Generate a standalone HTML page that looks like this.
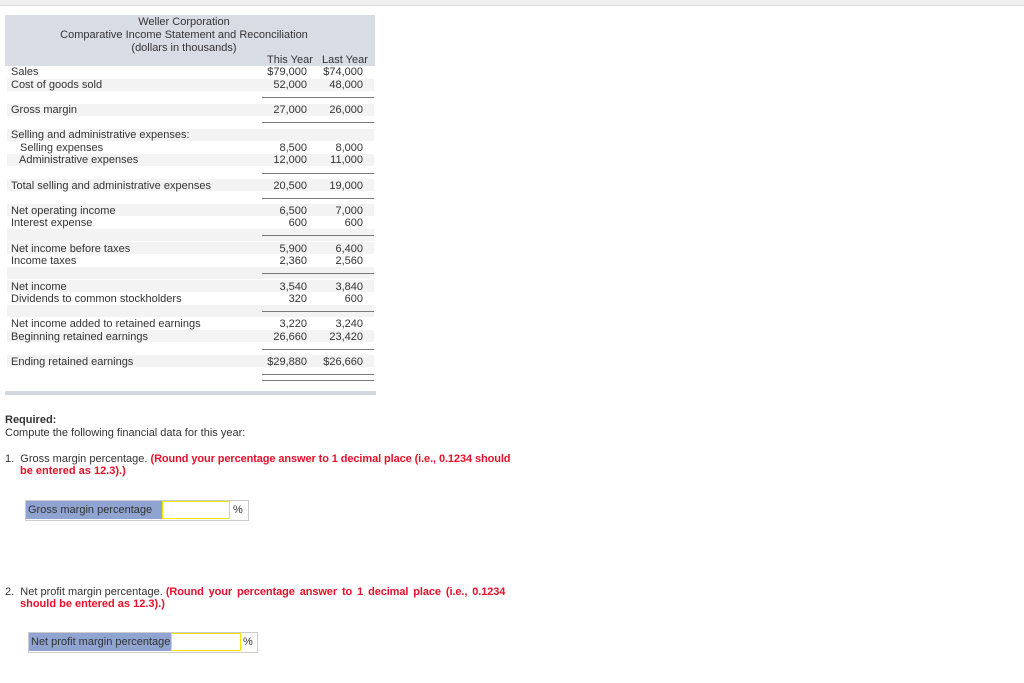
<!DOCTYPE html>
<html><head><meta charset="utf-8"><style>
body{margin:0;width:1024px;height:683px;background:#fff;font-family:"Liberation Sans",Arial,sans-serif;color:#333;position:relative;overflow:hidden}
.a{position:absolute;font-size:11px;line-height:13px;white-space:nowrap}
.t{margin-top:1px}
.bg{position:absolute;left:7px;width:367px;height:12px;background:#f3f3f3}
.ln{position:absolute;left:262px;width:112px;height:1px;background:#777}
.r1{position:absolute;width:60px;text-align:right;left:247px}
.r2{position:absolute;width:60px;text-align:right;left:303px}
.red{color:#e8102a;font-weight:bold}
</style></head><body>
<div style="position:absolute;left:0;top:0;width:1024px;height:5px;background:#f0f0f0;border-bottom:1px solid #ddd"></div>
<div style="position:absolute;left:5px;top:15px;width:370px;height:51px;background:#d8dce5"></div>
<div class="a" style="left:-1px;top:16px;width:370px;text-align:center">Weller Corporation<br>Comparative Income Statement and Reconciliation<br>(dollars in thousands)</div>
<div class="a" style="left:267px;top:54px">This Year&nbsp;&nbsp;&nbsp;Last Year</div>

<div class="bg" style="top:79px"></div>
<div class="bg" style="top:104px"></div>
<div class="bg" style="top:129px"></div>
<div class="bg" style="top:154px"></div>
<div class="bg" style="top:179px"></div>
<div class="bg" style="top:204px"></div>
<div class="bg" style="top:229px"></div>
<div class="bg" style="top:242px"></div>
<div class="bg" style="top:267px"></div>
<div class="bg" style="top:280px"></div>
<div class="bg" style="top:305px"></div>
<div class="bg" style="top:330px"></div>
<div class="bg" style="top:355px"></div>

<div class="ln" style="top:97px"></div>
<div class="ln" style="top:122px"></div>
<div class="ln" style="top:173px"></div>
<div class="ln" style="top:198px"></div>
<div class="ln" style="top:235px"></div>
<div class="ln" style="top:273px"></div>
<div class="ln" style="top:311px"></div>
<div class="ln" style="top:349px"></div>
<div class="ln" style="top:374px"></div>
<div class="ln" style="top:380px"></div>
<div style="position:absolute;left:5px;top:391px;width:371px;height:4px;background:#d3d7e0"></div>

<div class="a" style="left:11px;top:66px">Sales</div><div class="a r1" style="top:66px">$79,000</div><div class="a r2" style="top:66px">$74,000</div>
<div class="a" style="left:11px;top:79px">Cost of goods sold</div><div class="a r1" style="top:79px">52,000</div><div class="a r2" style="top:79px">48,000</div>
<div class="a" style="left:11px;top:104px">Gross margin</div><div class="a r1" style="top:104px">27,000</div><div class="a r2" style="top:104px">26,000</div>
<div class="a" style="left:11px;top:129px">Selling and administrative expenses:</div>
<div class="a" style="left:20px;top:142px">Selling expenses</div><div class="a r1" style="top:142px">8,500</div><div class="a r2" style="top:142px">8,000</div>
<div class="a" style="left:19px;top:154px">Administrative expenses</div><div class="a r1" style="top:154px">12,000</div><div class="a r2" style="top:154px">11,000</div>
<div class="a" style="left:11px;top:180px">Total selling and administrative expenses</div><div class="a r1" style="top:180px">20,500</div><div class="a r2" style="top:180px">19,000</div>
<div class="a" style="left:11px;top:205px">Net operating income</div><div class="a r1" style="top:205px">6,500</div><div class="a r2" style="top:205px">7,000</div>
<div class="a" style="left:11px;top:217px">Interest expense</div><div class="a r1" style="top:217px">600</div><div class="a r2" style="top:217px">600</div>
<div class="a" style="left:11px;top:243px">Net income before taxes</div><div class="a r1" style="top:243px">5,900</div><div class="a r2" style="top:243px">6,400</div>
<div class="a" style="left:11px;top:255px">Income taxes</div><div class="a r1" style="top:255px">2,360</div><div class="a r2" style="top:255px">2,560</div>
<div class="a" style="left:11px;top:281px">Net income</div><div class="a r1" style="top:281px">3,540</div><div class="a r2" style="top:281px">3,840</div>
<div class="a" style="left:11px;top:293px">Dividends to common stockholders</div><div class="a r1" style="top:293px">320</div><div class="a r2" style="top:293px">600</div>
<div class="a" style="left:11px;top:318px">Net income added to retained earnings</div><div class="a r1" style="top:318px">3,220</div><div class="a r2" style="top:318px">3,240</div>
<div class="a" style="left:11px;top:331px">Beginning retained earnings</div><div class="a r1" style="top:331px">26,660</div><div class="a r2" style="top:331px">23,420</div>
<div class="a" style="left:11px;top:356px">Ending retained earnings</div><div class="a r1" style="top:356px">$29,880</div><div class="a r2" style="top:356px">$26,660</div>

<div class="a" style="left:5px;top:414px;font-weight:bold">Required:</div>
<div class="a" style="left:5px;top:427px">Compute the following financial data for this year:</div>
<div class="a" style="left:5px;top:453px">1.&nbsp; Gross margin percentage. <span class="red" style="letter-spacing:-0.1px">(Round your percentage answer to 1 decimal place (i.e., 0.1234 should</span></div>
<div class="a red" style="left:20px;top:465px">be entered as 12.3).)</div>

<div style="position:absolute;left:25px;top:500px;width:222px;height:19px;border:1px solid #ccc"></div>
<div class="a" style="left:26px;top:501px;width:135px;height:18px;line-height:18px;background:#8fa4d1;padding-left:2px">Gross margin percentage</div>
<div style="position:absolute;left:162px;top:501px;width:66px;height:16px;border:1px solid #f2e600"></div>
<div class="a" style="left:233px;top:504px">%</div>

<div class="a" style="left:5px;top:586px">2.&nbsp; Net profit margin percentage. <span class="red" style="word-spacing:2px;letter-spacing:-0.1px">(Round your percentage answer to 1 decimal place (i.e., 0.1234</span></div>
<div class="a red" style="left:20px;top:598px">should be entered as 12.3).)</div>

<div style="position:absolute;left:28px;top:632px;width:228px;height:19px;border:1px solid #ccc"></div>
<div class="a" style="left:29px;top:633px;width:140px;height:18px;line-height:18px;background:#8fa4d1;padding-left:2px">Net profit margin percentage</div>
<div style="position:absolute;left:171px;top:633px;width:68px;height:16px;border:1px solid #f2e600"></div>
<div class="a" style="left:243px;top:636px">%</div>
</body></html>
